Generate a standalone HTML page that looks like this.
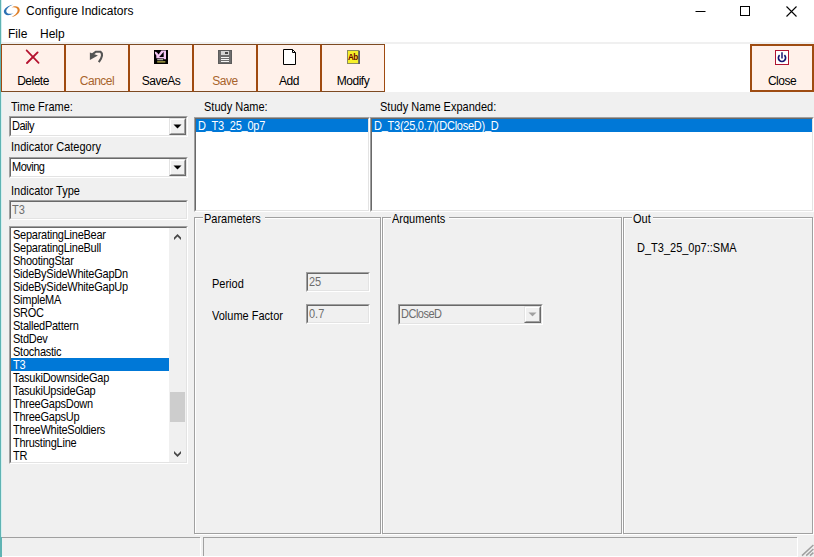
<!DOCTYPE html>
<html><head><meta charset="utf-8"><title>Configure Indicators</title>
<style>
html,body{margin:0;padding:0;}
body{width:814px;height:557px;overflow:hidden;position:relative;background:#f0f0f0;font-family:"Liberation Sans",sans-serif;font-size:11px;color:#000;}
.abs{position:absolute;}
#titlebar{left:0;top:0;width:814px;height:22px;background:#fff;}
#title{left:26px;top:3px;font-size:12px;line-height:16px;color:#000;}
#menubar{left:0;top:22px;width:814px;height:22px;background:#fff;border-bottom:2px solid #f0f0f0;box-sizing:border-box;}
.menu{top:26px;font-size:12px;line-height:16px;}
#toolbar{left:0;top:44px;width:814px;height:48px;background:#fff;}
.tb{top:44px;width:62px;height:46px;border:1px solid #a04a10;border-top-color:#7d4a22;border-bottom-color:#7d4a22;background:#fff1ea;}
.tb span{position:absolute;left:0;width:62px;letter-spacing:-0.5px;text-align:center;top:28px;font-size:12px;line-height:16px;}
.lbl{font-size:11px;line-height:13px;white-space:nowrap;transform:scaleY(1.08);transform-origin:0 10px;}
.sunken{border:1px solid;border-color:#a0a0a0 #fff #fff #a0a0a0;box-sizing:border-box;}
.sunken>.in{position:absolute;left:0;top:0;right:0;bottom:0;border:1px solid;border-color:#696969 #e3e3e3 #e3e3e3 #696969;background:#fff;}
.item{height:13px;line-height:13px;font-size:11px;white-space:nowrap;padding-left:2px;letter-spacing:-0.25px;transform:scaleY(1.08);transform-origin:0 10px;margin-top:1px;}
.sel{color:#fff;}
.item u{text-decoration:none;position:relative;top:-1px;}
.hl{background:#0078d7;height:13px;}
.group{border:1px solid #a0a0a0;box-sizing:border-box;box-shadow:1px 1px 0 #fff, inset 1px 1px 0 #fff;}
.raised{border:1px solid;border-color:#e3e3e3 #696969 #696969 #e3e3e3;box-sizing:border-box;}
.raised>.in{position:absolute;left:0;top:0;right:0;bottom:0;border:1px solid;border-color:#fff #a0a0a0 #a0a0a0 #fff;background:#f0f0f0;}
.tight{letter-spacing:-0.5px;}
.glabel{background:#f0f0f0;font-size:11px;line-height:13px;padding:0 0 0 1px;height:12px;overflow:hidden;box-sizing:border-box;white-space:nowrap;}
.glabel b{display:block;font-weight:normal;transform:scaleY(1.08);transform-origin:0 10px;margin-top:1px;}
</style></head><body>
<div class="abs" id="titlebar"></div>
<svg class="abs" style="left:0;top:0" width="24" height="22" viewBox="0 0 24 22">
 <path d="M13 4.8C8 5.3 3.4 9 3.9 12.1C4.5 15.5 8.8 16.4 13.6 13.3C9.8 14.4 6.6 13.8 6.3 11.5C6 9 9 6.3 13 4.8Z" fill="#2a70b2"/>
 <path d="M11.6 7.4C14 5.6 18.8 5.3 19.7 9.5C20.2 13.2 15 16.8 11.6 17.1C15 15.4 17.8 12.6 17.6 10.1C17.3 7.2 14.4 6.8 11.6 7.4Z" fill="#de7f28"/>
</svg>
<div class="abs" id="title">Configure Indicators</div>
<svg class="abs" style="left:690px;top:0" width="124" height="22" viewBox="0 0 124 22">
 <path d="M5.5 11.5h10" stroke="#000" stroke-width="1" fill="none"/>
 <rect x="50.5" y="6.5" width="9" height="9" stroke="#000" stroke-width="1" fill="none"/>
 <path d="M96.5 6.5l10 10M106.5 6.5l-10 10" stroke="#000" stroke-width="1.1" fill="none"/>
</svg>
<div class="abs" id="menubar"></div>
<div class="abs menu" style="left:8px">File</div>
<div class="abs menu" style="left:40px">Help</div>
<div class="abs" id="toolbar"></div>

<div class="abs tb" style="left:1px"><span>Delete</span></div>
<div class="abs tb" style="left:65px"><span style="color:#a8642c">Cancel</span></div>
<div class="abs tb" style="left:129px"><span>SaveAs</span></div>
<div class="abs tb" style="left:193px"><span style="color:#a8642c">Save</span></div>
<div class="abs tb" style="left:257px"><span>Add</span></div>
<div class="abs tb" style="left:321px"><span>Modify</span></div>
<div class="abs tb" style="left:750px;border-width:2px;width:60px;height:44px;border-color:#9e4c12"><span style="left:-1px;top:27px;width:62px">Close</span></div>
<!-- icons -->
<svg class="abs" style="left:24px;top:48px" width="18" height="18" viewBox="0 0 18 18">
 <path d="M2.6 2.4L14.6 14.8" stroke="#b5122f" stroke-width="1.7" stroke-linecap="round" fill="none"/>
 <path d="M13.6 4.4L3 15" stroke="#b5122f" stroke-width="1.9" stroke-linecap="round" fill="none"/>
</svg>
<svg class="abs" style="left:88px;top:48px" width="18" height="18" viewBox="0 0 18 18">
 <path d="M1.9 4.6L1.9 12L9.9 7.4Z" fill="#555"/>
 <path d="M4.4 6.4L7.8 3.7L12.4 3.7Q14.3 5 14 7.6Q13.5 10.8 10.8 14.2" stroke="#555" stroke-width="2.1" fill="none"/>
</svg>
<svg class="abs" style="left:154px;top:50px" width="14" height="14" viewBox="0 0 14 14">
 <rect x="0" y="0" width="14" height="14" fill="#000"/>
 <path d="M0.9 1.4L3 2.6L4.6 4.4L7.4 0.6L12 0.6L12 9.2L10 9.2L10 8.5L2.3 8.3L2.3 5.6L1 3.6Z" fill="#f3c6f3"/>
 <path d="M5.2 7L9.7 1.7L9.7 7Z" fill="#000"/>
 <rect x="3.2" y="9.3" width="6" height="0.9" fill="#f6f2e4"/>
 <rect x="3.2" y="11.4" width="8.2" height="1" fill="#efe765"/>
</svg>
<svg class="abs" style="left:218px;top:50px" width="14" height="14" viewBox="0 0 14 14">
 <rect x="0" y="0" width="14" height="14" fill="#5c5c5c"/>
 <rect x="1" y="1" width="12" height="12" fill="#6e6e6e"/>
 <rect x="3" y="1" width="8" height="4" fill="#d4d4d4"/>
 <rect x="7" y="2" width="3" height="2" fill="#484848"/>
 <rect x="3" y="7" width="8" height="1" fill="#f4f4f4"/>
 <rect x="3" y="9" width="8" height="1" fill="#f4f4f4"/>
 <rect x="3" y="11" width="8" height="1" fill="#f4f4f4"/>
</svg>
<svg class="abs" style="left:282px;top:48px" width="16" height="18" viewBox="0 0 16 18">
 <path d="M1.5 1.5L10.5 1.5L13.5 4.5L13.5 16.5L1.5 16.5Z" fill="#fff" stroke="#000" stroke-width="1"/>
 <path d="M10.5 1.5L10.5 4.5L13.5 4.5" fill="none" stroke="#000" stroke-width="1"/>
</svg>
<svg class="abs" style="left:346px;top:49px" width="16" height="16" viewBox="0 0 16 16">
 <rect x="1.5" y="1.5" width="11.5" height="13" fill="#f6f02a" stroke="#8c8c5c" stroke-width="1"/>
 <rect x="12.4" y="2" width="1.4" height="13" fill="#404660"/>
</svg>
<div class="abs" style="left:348px;top:53px;font-size:9px;line-height:9px;font-weight:bold;color:#6a0000;letter-spacing:-0.6px;transform:scaleX(0.9);transform-origin:0 0">Ab</div>
<svg class="abs" style="left:775px;top:50px" width="15" height="15" viewBox="0 0 15 15">
 <rect x="0.5" y="0.5" width="13" height="14" fill="#fff" stroke="#b01432" stroke-width="1"/>
 <path d="M4.6 5.2A3.6 3.6 0 1 0 9.4 5.2" stroke="#141470" stroke-width="1.7" fill="none"/>
 <path d="M7 2.2L7 8.6" stroke="#141470" stroke-width="1.5" fill="none"/>
</svg>
<!-- left column -->
<div class="abs lbl" style="left:11px;top:101px">Time Frame:</div>
<div class="abs sunken" style="left:9px;top:116px;width:179px;height:21px"><div class="in"></div></div>
<div class="abs lbl tight" style="left:12px;top:120px">Daily</div>
<div class="abs raised" style="left:169px;top:118px;width:17px;height:17px"><div class="in"></div></div><svg class="abs" style="left:169px;top:118px" width="17" height="17" viewBox="0 0 17 17"><path d="M4.5 6.5L12.5 6.5L8.5 10.5Z" fill="#000"/></svg>
<div class="abs lbl" style="left:11px;top:141px">Indicator Category</div>
<div class="abs sunken" style="left:9px;top:157px;width:179px;height:21px"><div class="in"></div></div>
<div class="abs lbl tight" style="left:12px;top:161px">Moving</div>
<div class="abs raised" style="left:169px;top:159px;width:17px;height:17px"><div class="in"></div></div><svg class="abs" style="left:169px;top:159px" width="17" height="17" viewBox="0 0 17 17"><path d="M4.5 6.5L12.5 6.5L8.5 10.5Z" fill="#000"/></svg>
<div class="abs lbl" style="left:11px;top:185px">Indicator Type</div>
<div class="abs sunken" style="left:9px;top:200px;width:179px;height:20px"><div class="in" style="background:#f0f0f0"></div></div>
<div class="abs lbl" style="left:12px;top:204px;color:#6d6d6d">T3</div>

<div class="abs sunken" style="left:9px;top:226px;width:179px;height:238px"><div class="in"></div></div>
<div class="abs" style="left:169px;top:228px;width:17px;height:234px;background:#f0f0f0"></div>
<div class="abs" style="left:170px;top:392px;width:15px;height:30px;background:#cdcdcd"></div>
<svg class="abs" style="left:169px;top:228px" width="17" height="234" viewBox="0 0 17 234">
 <path d="M8.5 6L12 9.5L12 12L8.5 8.5L5 12L5 9.5Z" fill="#484848"/>
 <path d="M5 223L8.5 226.5L12 223L12 225.5L8.5 229L5 225.5Z" fill="#484848"/>
</svg>
<div class="abs item" style="left:11px;top:228px;width:156px">SeparatingLineBear</div>
<div class="abs item" style="left:11px;top:241px;width:156px">SeparatingLineBull</div>
<div class="abs item" style="left:11px;top:254px;width:156px">ShootingStar</div>
<div class="abs item" style="left:11px;top:267px;width:156px">SideBySideWhiteGapDn</div>
<div class="abs item" style="left:11px;top:280px;width:156px">SideBySideWhiteGapUp</div>
<div class="abs item" style="left:11px;top:293px;width:156px">SimpleMA</div>
<div class="abs item" style="left:11px;top:306px;width:156px">SROC</div>
<div class="abs item" style="left:11px;top:319px;width:156px">StalledPattern</div>
<div class="abs item" style="left:11px;top:332px;width:156px">StdDev</div>
<div class="abs item" style="left:11px;top:345px;width:156px">Stochastic</div>
<div class="abs hl" style="left:11px;top:358px;width:158px"></div>
<div class="abs item sel" style="left:11px;top:358px;width:156px">T3</div>
<div class="abs item" style="left:11px;top:371px;width:156px">TasukiDownsideGap</div>
<div class="abs item" style="left:11px;top:384px;width:156px">TasukiUpsideGap</div>
<div class="abs item" style="left:11px;top:397px;width:156px">ThreeGapsDown</div>
<div class="abs item" style="left:11px;top:410px;width:156px">ThreeGapsUp</div>
<div class="abs item" style="left:11px;top:423px;width:156px">ThreeWhiteSoldiers</div>
<div class="abs item" style="left:11px;top:436px;width:156px">ThrustingLine</div>
<div class="abs item" style="left:11px;top:449px;width:156px">TR</div>

<!-- middle -->
<div class="abs lbl" style="left:204px;top:101px">Study Name:</div>
<div class="abs sunken" style="left:194px;top:117px;width:176px;height:95px"><div class="in"></div></div>
<div class="abs hl" style="left:196px;top:119px;width:172px"></div>
<div class="abs item sel" style="left:196px;top:119px;width:170px">D<u>_</u>T3<u>_</u>25<u>_</u>0p7</div>
<div class="abs lbl" style="left:380px;top:101px">Study Name Expanded:</div>
<div class="abs sunken" style="left:370px;top:117px;width:444px;height:95px"><div class="in"></div></div>
<div class="abs hl" style="left:372px;top:119px;width:440px"></div>
<div class="abs item sel" style="left:372px;top:119px;width:438px">D<u>_</u>T3(25,0.7)(DCloseD)<u>_</u>D</div>

<!-- groups -->
<div class="abs group" style="left:194px;top:217px;width:187px;height:317px"></div>
<div class="abs glabel" style="left:203px;top:212px;width:62px"><b>Parameters</b></div>
<div class="abs group" style="left:382px;top:217px;width:240px;height:317px"></div>
<div class="abs glabel" style="left:391px;top:212px;width:58px"><b>Arguments</b></div>
<div class="abs group" style="left:623px;top:217px;width:190px;height:317px"></div>
<div class="abs glabel" style="left:632px;top:212px;width:21px"><b>Out</b></div>

<div class="abs lbl" style="left:212px;top:278px">Period</div>
<div class="abs sunken" style="left:306px;top:272px;width:64px;height:20px"><div class="in" style="background:#f0f0f0"></div></div>
<div class="abs lbl" style="left:309px;top:276px;color:#6d6d6d">25</div>
<div class="abs lbl" style="left:212px;top:310px">Volume Factor</div>
<div class="abs sunken" style="left:306px;top:304px;width:64px;height:20px"><div class="in" style="background:#f0f0f0"></div></div>
<div class="abs lbl" style="left:309px;top:308px;color:#6d6d6d">0.7</div>

<div class="abs sunken" style="left:398px;top:304px;width:145px;height:21px"><div class="in" style="background:#f0f0f0"></div></div>
<div class="abs lbl tight" style="left:401px;top:308px;color:#6d6d6d">DCloseD</div>
<div class="abs raised" style="left:524px;top:306px;width:17px;height:17px"><div class="in"></div></div><svg class="abs" style="left:524px;top:306px" width="17" height="17" viewBox="0 0 17 17"><path d="M5 7.5L12 7.5L8.5 11Z" fill="#fff"/><path d="M4.5 6.5L12.5 6.5L8.5 10.5Z" fill="#a0a0a0"/></svg>

<div class="abs lbl" style="left:637px;top:242px">D_T3_25_0p7::SMA</div>

<!-- status bar -->
<div class="abs" style="left:1px;top:537px;width:199px;height:1px;background:#a0a0a0"></div>
<div class="abs" style="left:200px;top:538px;width:1px;height:19px;background:#fff"></div>
<div class="abs" style="left:203px;top:537px;width:594px;height:1px;background:#a0a0a0"></div>
<div class="abs" style="left:203px;top:537px;width:1px;height:19px;background:#a0a0a0"></div>
<div class="abs" style="left:797px;top:538px;width:1px;height:19px;background:#fff"></div>
<div class="abs" style="left:0;top:556px;width:798px;height:1px;background:#fff"></div>
<svg class="abs" style="left:800px;top:543px" width="14" height="14" viewBox="0 0 14 14">
 <path d="M2 12.6L13.4 2M6.2 12.6L13.4 6M10 12.6L13.4 9.6" stroke="#a0a0a0" stroke-width="1.5" fill="none"/>
</svg>
<!-- left teal edge -->
<div class="abs" style="left:0;top:0;width:1px;height:557px;background:#5fb3b3"></div>
<div class="abs" style="left:1px;top:0;width:1px;height:44px;background:#d4f0f0"></div>
<div class="abs" style="left:1px;top:92px;width:1px;height:445px;background:#d4f0f0"></div>
<div class="abs" style="left:1px;top:537px;width:1px;height:20px;background:#5fb3b3"></div>
</body></html>
